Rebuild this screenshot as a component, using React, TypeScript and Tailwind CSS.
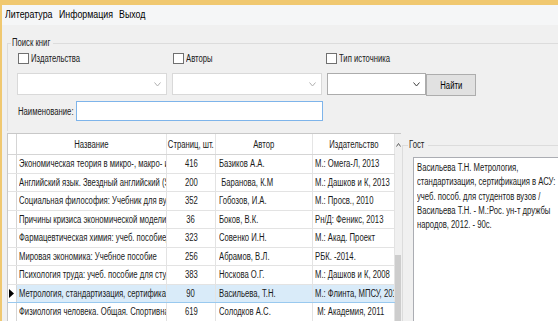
import React from 'react';

const rows = [
  ['Экономическая теория в микро-, макро- и мегаэкономике', '416', 'Базиков А.А.', 'М.: Омега-Л, 2013'],
  ['Английский язык. Звездный английский (Star English)', '200', ' Баранова, К.М', 'М.: Дашков и К, 2013'],
  ['Социальная философия: Учебник для вузов', '352', 'Гобозов, И.А.', 'М.: Просв., 2010'],
  ['Причины кризиса экономической модели СССР', '36', 'Боков, В.К.', 'Рн/Д: Феникс, 2013'],
  ['Фармацевтическая химия: учеб. пособиедля вузов', '323', 'Совенко И.Н.', 'М.: Акад. Проект'],
  ['Мировая экономика: Учебное пособие', '256', 'Абрамов, В.Л.', 'РБК. -2014.'],
  ['Психология труда: учеб. пособие для студентов', '383', 'Носкова О.Г.', 'М.: Дашков и К, 2008'],
  ['Метрология, стандартизация, сертификация в АСУ', '90', 'Васильева, Т.Н.', 'М.: Флинта, МПСУ, 2012'],
  ['Физиология человека. Общая. Спортивная. Возрастная', '619', 'Солодков А.С.', ' М: Академия, 2011'],
];

const gost = [
  'Васильева Т.Н. Метрология,',
  'стандартизация, сертификация в АСУ:',
  'учеб. пособ. для студентов вузов /',
  'Васильева Т.Н. - М.:Рос. ун-т дружбы',
  'народов, 2012. - 90с.',
];

// the form uses a narrow UI font, so text is drawn condensed
function T({ children, center }: { children: React.ReactNode; center?: boolean }) {
  return (
    <span className={`inline-block whitespace-pre scale-x-[0.77] ${center ? 'origin-center' : 'origin-left'}`}>
      {children}
    </span>
  );
}

function Check({ label, w }: { label: string; w: string }) {
  return (
    <div className={`flex items-center gap-[2px] ${w}`}>
      <span className="w-[11px] h-[11px] shrink-0 bg-white border border-[#707070]" />
      <T>{label}</T>
    </div>
  );
}

function Combo({ w, dark }: { w: string; dark?: boolean }) {
  return (
    <div
      className={`${w} h-[22px] bg-white border flex items-center justify-end pr-[5px] ${
        dark ? 'border-[#acacac] text-[#404040]' : 'border-[#d9d9d9] text-[#b0b0b0]'
      }`}
    >
      <svg width="7" height="5" viewBox="0 0 7 5">
        <path d="M0.5 0.5 L3.5 4 L6.5 0.5" fill="none" stroke="currentColor" strokeWidth="1" />
      </svg>
    </div>
  );
}

export default function App() {
  return (
    <div className="w-[558px] h-[321px] overflow-hidden bg-[#f0c870] pt-[5px] pl-[2px] font-['Liberation_Sans',sans-serif] text-[10px] text-[#1a1a1a]">
      <div className="h-full flex flex-col bg-[#f0f0f0]">
        <div className="h-[20px] shrink-0 bg-[#f5f6f7] flex items-center pl-[3px] text-[10.5px] text-black">
          <span className="w-[54px] whitespace-pre">
            <span className="inline-block scale-x-[0.84] origin-left">Литература</span>
          </span>
          <span className="w-[60px] whitespace-pre">
            <span className="inline-block scale-x-[0.84] origin-left">Информация</span>
          </span>
          <span className="whitespace-pre">
            <span className="inline-block scale-x-[0.84] origin-left">Выход</span>
          </span>
        </div>

        <div className="ml-[5px] mt-[18px] h-[88px] border-t border-l border-[#dcdcdc] shrink-0">
          <div className="-mt-[8px] ml-[3px] w-[42px] px-[1px] bg-[#f0f0f0] leading-[14px]">
            <T>Поиск книг</T>
          </div>
          <div className="ml-[10px] mt-[2px] flex items-center h-[12px]">
            <Check label="Издательства" w="w-[155px]" />
            <Check label="Авторы" w="w-[153px]" />
            <Check label="Тип источника" w="w-[120px]" />
          </div>
          <div className="ml-[9px] mt-[9px] flex items-start">
            <Combo w="w-[150px]" />
            <div className="w-[5px]" />
            <Combo w="w-[150px]" />
            <div className="w-[5px]" />
            <Combo w="w-[99px]" dark />
            <div className="mt-[1px] w-[50px] h-[22px] bg-[#e1e1e1] border border-[#adadad] flex items-center justify-center text-black">
              <T center>Найти</T>
            </div>
          </div>
          <div className="ml-[10px] mt-[5px] flex items-center">
            <span className="w-[58px] shrink-0">
              <T>Наименование:</T>
            </span>
            <div className="w-[247px] h-[20px] bg-white border border-[#7eb4ea]" />
          </div>
        </div>

        <div className="flex-1 flex mt-[2px] min-h-0">
          <div className="ml-[5px] w-[394px] flex border-t border-l border-[#c8c8c8] bg-white">
            <div className="w-[387px] flex flex-col">
              <div className="h-[21px] shrink-0 grid grid-cols-[9px_150px_49px_97px_82px] border-b border-[#d5d5d5]">
                <div className="border-r border-[#d5d5d5]" />
                {['Название', 'Страниц, шт.', 'Автор', 'Издательство'].map((h) => (
                  <div key={h} className="border-r border-[#e5e5e5] flex items-center justify-center overflow-hidden">
                    <T center>{h}</T>
                  </div>
                ))}
              </div>
              {rows.map((r, i) => {
                const sel = i === 7;
                return (
                  <div
                    key={i}
                    className={`h-[18.5px] shrink-0 grid grid-cols-[9px_150px_49px_97px_82px] border-b ${
                      sel ? 'bg-[#d9ebf9] border-[#99c9ef]' : 'border-[#e3e3e3]'
                    }`}
                  >
                    <div className="bg-white border-r border-[#d5d5d5] flex items-center">
                      {sel && (
                        <svg width="6" height="9" viewBox="0 0 6 9" className="ml-[1px]">
                          <path d="M0 0 L5 4.5 L0 9 Z" fill="#000" />
                        </svg>
                      )}
                    </div>
                    <div className="border-r border-[#e3e3e3] px-[2px] flex items-center overflow-hidden">
                      <T>{r[0]}</T>
                    </div>
                    <div className="border-r border-[#e3e3e3] flex items-center justify-center overflow-hidden">
                      <T center>{r[1]}</T>
                    </div>
                    <div className="border-r border-[#e3e3e3] px-[3px] flex items-center overflow-hidden">
                      <T>{r[2]}</T>
                    </div>
                    <div className="border-r border-[#e3e3e3] px-[2px] flex items-center overflow-hidden">
                      <T>{r[3]}</T>
                    </div>
                  </div>
                );
              })}
            </div>
            <div className="w-[7px] bg-[#f0f0f0] flex flex-col">
              <div className="h-[21px] flex items-center justify-center">
                <svg width="5" height="4" viewBox="0 0 5 4">
                  <path d="M0.5 3.5 L2.5 0.5 L4.5 3.5" fill="none" stroke="#606060" strokeWidth="1" />
                </svg>
              </div>
              <div className="h-[100px]" />
              <div className="flex-1 bg-[#cdcdcd]" />
            </div>
          </div>

          <div className="flex-1 ml-[1px] mt-[12px] border-t border-l border-[#dcdcdc] flex flex-col">
            <div className="-mt-[8px] ml-[5px] w-[20px] px-[1px] bg-[#f0f0f0] leading-[14px]">
              <T>Гост</T>
            </div>
            <div className="ml-[10px] mt-[5px] flex-1 bg-white border-t border-l border-[#abadb3] pl-[3px] pt-[3px] leading-[14.3px]">
              {gost.map((l) => (
                <div key={l}>
                  <T>{l}</T>
                </div>
              ))}
            </div>
          </div>
        </div>
      </div>
    </div>
  );
}
